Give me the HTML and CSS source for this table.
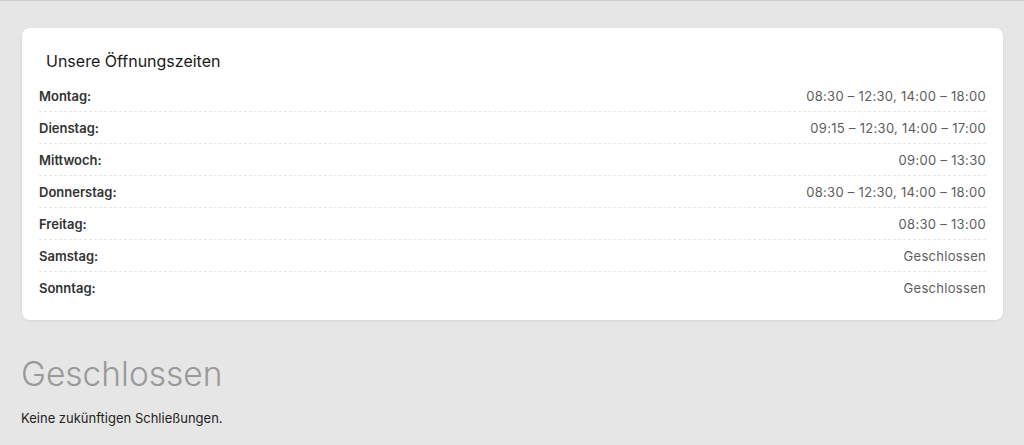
FILE: index.html
```html
<!DOCTYPE html>
<html lang="de">
<head>
    <meta charset="UTF-8">
    <meta name="viewport" content="width=device-width, initial-scale=1.0">
    <title>Öffnungszeiten</title>
    <link rel="stylesheet" href="styles.css">
</head>
<body>
    <!-- Opening hours card -->
    <div class="hours-card">
        <h3 class="hours-title">Unsere Öffnungszeiten</h3>
        <div class="hours-row"><span class="day">Montag:</span><span class="time">08:30 – 12:30, 14:00 – 18:00</span></div>
        <div class="hours-row"><span class="day">Dienstag:</span><span class="time">09:15 – 12:30, 14:00 – 17:00</span></div>
        <div class="hours-row"><span class="day">Mittwoch:</span><span class="time">09:00 – 13:30</span></div>
        <div class="hours-row"><span class="day">Donnerstag:</span><span class="time">08:30 – 12:30, 14:00 – 18:00</span></div>
        <div class="hours-row"><span class="day">Freitag:</span><span class="time">08:30 – 13:00</span></div>
        <div class="hours-row"><span class="day">Samstag:</span><span class="time">Geschlossen</span></div>
        <div class="hours-row"><span class="day">Sonntag:</span><span class="time">Geschlossen</span></div>
    </div>

    <!-- Closures -->
    <h2 class="closed-title">Geschlossen</h2>
    <p class="closed-note">Keine zukünftigen Schließungen.</p>
</body>
</html>
```

FILE: styles.css
```css
body {
    font-family: Inter, "Liberation Sans", sans-serif;
    margin: 0;
    padding: 27px 21px 0 21px;
    background-color: #e6e6e6;
    border-top: 1px solid #cfcfcf;
    color: #222;
}
.hours-card {
    background-color: #fff;
    margin-left: 1px;
    padding: 17px 17px 17px;
    border-radius: 8px;
    box-shadow: 0 1px 3px rgba(0,0,0,0.08);
}
.hours-title {
    margin: 0;
    padding: 6px 7px 9px;
    font-size: 16px;
    line-height: 20px;
    font-weight: 400;
    color: #1a1a1a;
}
.hours-row {
    display: flex;
    justify-content: space-between;
    align-items: center;
    height: 31px;
    font-size: 13px;
    border-bottom: 1px dashed #e8e8e8;
}
.hours-row:last-child {
    border-bottom: none;
}
.day {
    font-weight: 600;
    color: #333;
}
.time {
    color: #5e5e5e;
    letter-spacing: 0.3px;
}
.closed-title {
    margin: 34px 0 0;
    font-size: 33.5px;
    line-height: 40px;
    font-weight: 300;
    color: #999;
}
.closed-note {
    margin: 16px 0 0;
    font-size: 13px;
    color: #222;
}
```
